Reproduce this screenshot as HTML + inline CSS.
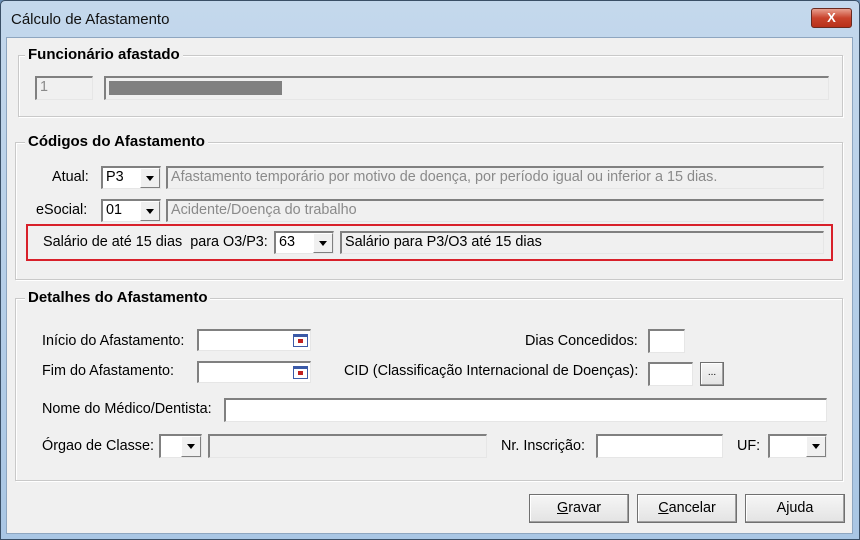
<!DOCTYPE html>
<html><head><meta charset="utf-8">
<style>
*{box-sizing:border-box;margin:0;padding:0}
body{width:860px;height:540px;overflow:hidden;background:#6b8fb5;font-family:"Liberation Sans",sans-serif;font-size:14.4px;color:#000;position:relative}
.win{position:absolute;left:0;top:0;width:860px;height:540px;background:linear-gradient(#c4d8ec,#a9c6e4);border:1px solid #3a4f66;border-radius:5px 5px 0 0}
.body{position:absolute;left:6px;top:37px;width:847px;height:497px;background:#f0f0f0;border:1px solid #8ea6c0}
.a{position:absolute;white-space:nowrap}
.title{left:10px;top:10px;font-size:15px;color:#111}
.close{position:absolute;left:810px;top:7px;width:41px;height:20px;border:1px solid #6b2a1f;border-radius:3px;background:linear-gradient(#e8a08f,#c9432c 50%,#b8301a);color:#fff;font-weight:bold;text-align:center;line-height:18px;font-size:13px}
.grp{position:absolute;border:1px solid #c9c9c9;box-shadow:inset 1px 1px 0 #fff,1px 1px 0 #fff}
.gl{position:absolute;background:#f0f0f0;font-weight:bold;font-size:15px;padding:0 3px;white-space:nowrap}
.in{position:absolute;background:#fff;border-top:2px solid #808080;border-left:2px solid #808080;border-right:1px solid #e6e6e6;border-bottom:1px solid #e6e6e6;padding:1px 3px;white-space:nowrap;overflow:hidden}
.dis{background:#f0f0f0;color:#8a8a8a}
.dd{position:absolute;top:0;right:0;width:20px;bottom:0;background:#f0f0f0;border-right:1px solid #808080;border-bottom:1px solid #808080;border-left:1px solid #fff;border-top:1px solid #fff}
.dd:after{content:"";position:absolute;left:5px;top:7px;border-left:4px solid transparent;border-right:4px solid transparent;border-top:5px solid #000}
.cal{position:absolute;right:2px;top:3px;width:15px;height:13px;border:1px solid #3b5aa8;border-top:3px solid #3b5aa8;background:#fff}
.cal:after{content:"";position:absolute;left:4px;top:2px;width:5px;height:4px;background:#c02020}
.btn{position:absolute;height:29px;background:linear-gradient(#f6f6f6,#e3e3e3);border:1px solid #707070;box-shadow:inset -1px -1px 0 #a0a0a0,inset 1px 1px 0 #fff;text-align:center;line-height:27px;font-size:14.4px}
u{text-decoration:underline}
</style></head><body>
<div class="win">
<div class="a title">Cálculo de Afastamento</div>
<div class="close">X</div>
</div>
<div class="body"></div>

<div class="grp" style="left:18px;top:55px;width:825px;height:62px"></div>
<div class="gl" style="left:25px;top:46px">Funcionário afastado</div>
<div class="in dis" style="left:35px;top:76px;width:58px;height:24px">1</div>
<div class="in dis" style="left:104px;top:76px;width:725px;height:24px"><div style="position:absolute;left:3px;top:3px;width:173px;height:14px;background:#808080"></div></div>

<div class="grp" style="left:15px;top:142px;width:828px;height:138px"></div>
<div class="gl" style="left:25px;top:133px">Códigos do Afastamento</div>
<div class="a" style="left:52px;top:169px">Atual:</div>
<div class="in" style="left:101px;top:166px;width:60px;height:23px">P3<div class="dd"></div></div>
<div class="in dis" style="left:166px;top:166px;width:658px;height:23px">Afastamento temporário por motivo de doença, por período igual ou inferior a 15 dias.</div>
<div class="a" style="left:36px;top:202px">eSocial:</div>
<div class="in" style="left:101px;top:199px;width:60px;height:23px">01<div class="dd"></div></div>
<div class="in dis" style="left:166px;top:199px;width:658px;height:23px">Acidente/Doença do trabalho</div>
<div style="position:absolute;left:26px;top:224px;width:807px;height:37px;border:2px solid #d8202a"></div>
<div class="a" style="left:43px;top:234px">Salário de até 15 dias&nbsp; para O3/P3:</div>
<div class="in" style="left:274px;top:231px;width:60px;height:23px">63<div class="dd"></div></div>
<div class="in" style="left:340px;top:231px;width:484px;height:23px;background:#f0f0f0">Salário para P3/O3 até 15 dias</div>

<div class="grp" style="left:15px;top:298px;width:828px;height:183px"></div>
<div class="gl" style="left:25px;top:289px">Detalhes do Afastamento</div>
<div class="a" style="left:42px;top:333px">Início do Afastamento:</div>
<div class="in" style="left:197px;top:329px;width:114px;height:22px"><div class="cal"></div></div>
<div class="a" style="left:525px;top:333px">Dias Concedidos:</div>
<div class="in" style="left:648px;top:329px;width:37px;height:24px"></div>
<div class="a" style="left:42px;top:363px">Fim do Afastamento:</div>
<div class="in" style="left:197px;top:361px;width:114px;height:22px"><div class="cal"></div></div>
<div class="a" style="left:344px;top:363px">CID (Classificação Internacional de Doenças):</div>
<div class="in" style="left:648px;top:362px;width:45px;height:24px"></div>
<div class="btn" style="left:700px;top:362px;width:24px;height:24px;line-height:20px;font-size:10px">...</div>
<div class="a" style="left:42px;top:401px">Nome do Médico/Dentista:</div>
<div class="in" style="left:224px;top:398px;width:603px;height:24px"></div>
<div class="a" style="left:42px;top:438px">Órgao de Classe:</div>
<div class="in" style="left:159px;top:434px;width:43px;height:24px"><div class="dd"></div></div>
<div class="in dis" style="left:208px;top:434px;width:279px;height:24px"></div>
<div class="a" style="left:501px;top:438px">Nr. Inscrição:</div>
<div class="in" style="left:596px;top:434px;width:127px;height:24px"></div>
<div class="a" style="left:737px;top:438px">UF:</div>
<div class="in" style="left:768px;top:434px;width:59px;height:24px"><div class="dd"></div></div>

<div class="btn" style="left:529px;top:494px;width:100px"><u>G</u>ravar</div>
<div class="btn" style="left:637px;top:494px;width:100px"><u>C</u>ancelar</div>
<div class="btn" style="left:745px;top:494px;width:100px">Ajuda</div>
</body></html>
